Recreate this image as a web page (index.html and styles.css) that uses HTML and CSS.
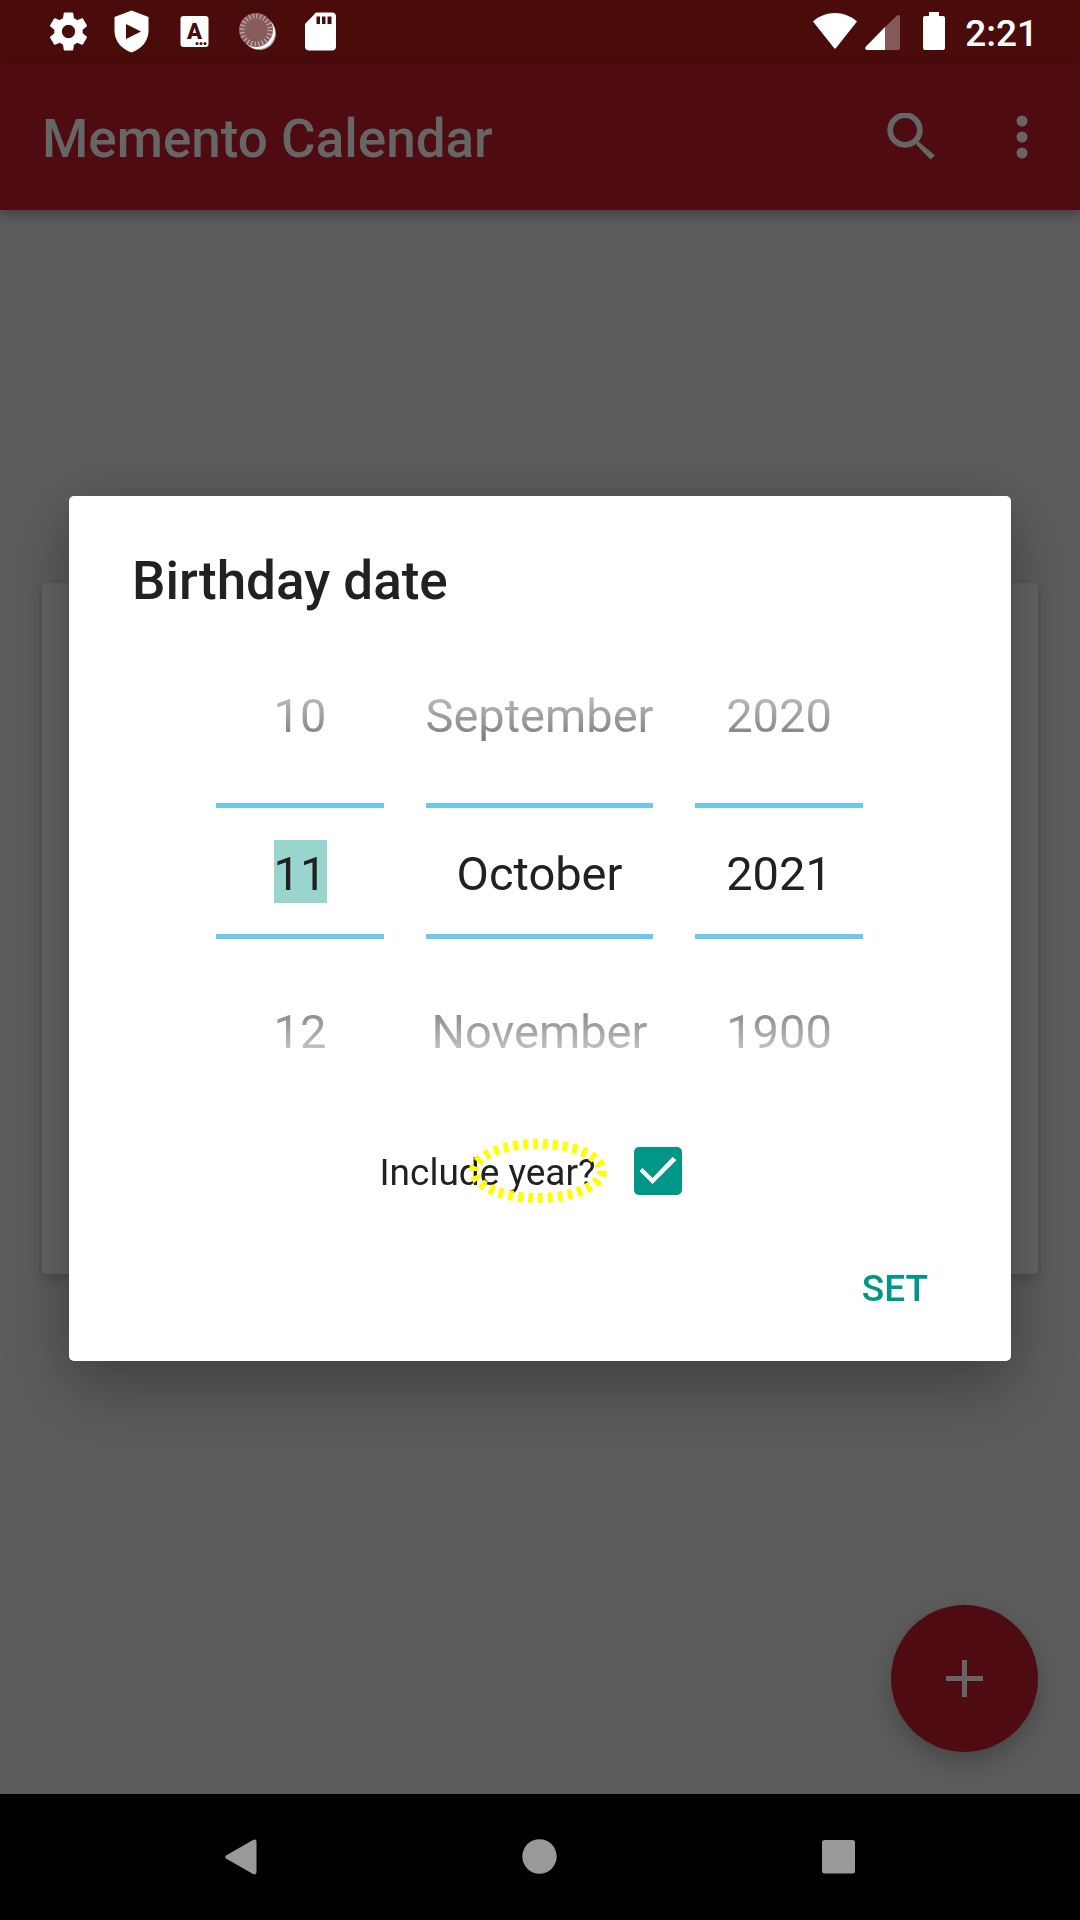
FILE: index.html
```html
<!DOCTYPE html>
<html lang="en">
<head>
<meta charset="utf-8">
<meta name="viewport" content="width=device-width, initial-scale=1">
<title>Memento Calendar</title>
<link rel="stylesheet" href="styles.css">
</head>
<body>
<div class="screen">
  <div class="status-bar">
    <div class="status-group">
      <svg class="status-icon" viewBox="0 0 63 63" aria-hidden="true">
        <g transform="translate(31.500 31.500) scale(1.900) translate(-12 -12)"><path fill="#fff" d="M19.430 12.980c.04-.32.07-.64.07-.98s-.03-.66-.07-.98l2.110-1.650c.19-.15.240-.42.120-.64l-2-3.460c-.12-.22-.39-.3-.61-.22l-2.490 1c-.52-.4-1.080-.73-1.690-.98l-.38-2.650C14.460 2.180 14.250 2 14 2h-4c-.25 0-.46.180-.49.420l-.38 2.650c-.61.250-1.170.590-1.690.98l-2.490-1c-.23-.09-.49 0-.61.220l-2 3.460c-.13.220-.07.490.120.640l2.110 1.650c-.04.320-.07.650-.07.980s.03.660.07.980l-2.110 1.650c-.19.150-.24.420-.12.640l2 3.460c.12.220.39.300.61.220l2.490-1c.52.400 1.080.730 1.690.980l.38 2.650c.03.240.24.420.49.420h4c.25 0 .46-.18.490-.42l.38-2.650c.61-.25 1.170-.59 1.690-.98l2.490 1c.23.090.49 0 .61-.22l2-3.460c.12-.22.070-.49-.12-.64zM12 15.500a3.500 3.500 0 1 1 0-7 3.500 3.500 0 0 1 0 7z"/></g>
      </svg>
      <svg class="status-icon" viewBox="0 0 63 63" aria-hidden="true">
        <path fill="#fff" fill-rule="evenodd" d="M31.500 10.500 48.500 17v14c0 10-7 18-17 21.500C21.500 49 14.500 41 14.500 31V17zM26 24v15l15-7.500z"/>
      </svg>
      <svg class="status-icon" viewBox="0 0 63 63" aria-hidden="true">
        <rect x="17.500" y="16" width="28" height="31" rx="3" fill="#fff"/>
        <text class="status-letter" x="31.500" y="39" text-anchor="middle">A</text>
        <g fill="#4a0b0b"><circle cx="34" cy="43.500" r="1.500"/><circle cx="38" cy="43.500" r="1.500"/><circle cx="42" cy="43.500" r="1.500"/></g>
      </svg>
      <svg class="status-icon" viewBox="0 0 63 63" aria-hidden="true">
        <circle cx="33.500" cy="33.500" r="16.500" fill="#b99a9a"/>
        <circle cx="32.500" cy="32.500" r="16.500" fill="#fff"/>
        <circle cx="30" cy="30" r="17" fill="#875c5c"/>
        <circle cx="30" cy="30" r="14" fill="none" stroke="#c3acac" stroke-width="5" stroke-dasharray="1.200 2.465"/>
      </svg>
      <svg class="status-icon" viewBox="0 0 63 63" aria-hidden="true">
        <path fill="#fff" fill-rule="evenodd" d="M27 12.500h16c2.500 0 4 1.500 4 4v30c0 2.500-1.500 4-4 4H20c-2.500 0-4-1.500-4-4V24zM27.500 16.500v7.500h3.500v-7.500zM33 16.500v7.500h3.500v-7.500zM38.500 16.500v7.500H42.500v-7.500z"/>
      </svg>
    </div>
    <div class="status-group">
      <svg class="signal-icon" viewBox="0 0 52 63" aria-hidden="true">
        <path fill="#fff" d="M4 21.500C10 16 18 13 26 13s16 3 22 8.500L27 48q-1 1.500-2 0z"/>
      </svg>
      <svg class="signal-icon" viewBox="0 0 52 63" aria-hidden="true">
        <path fill="#fff" fill-opacity=".32" d="M24 27 36 15.500Q39 14 39 16.500V48q0 2-2 2H24z"/>
        <path fill="#fff" d="M24 27V50H6q-3-1-1-3.500z"/>
      </svg>
      <svg class="signal-icon" viewBox="0 0 52 63" aria-hidden="true">
        <path fill="#fff" d="M16 12h10v4h4q2 0 2 2v30q0 2-2 2H12q-2 0-2-2V18q0-2 2-2h4z"/>
      </svg>
      <time class="clock">2:21</time>
    </div>
  </div>

  <header class="app-bar">
    <h1 class="app-title">Memento Calendar</h1>
    <div class="app-actions">
      <button class="icon-button" type="button" aria-label="Search">
        <svg width="48" height="48" viewBox="0 0 48 48" aria-hidden="true">
          <circle cx="18" cy="17" r="14.800" fill="none" stroke="#666" stroke-width="5.800"/>
          <path d="M28 27.500 31.500 28.500 48 42.500 43.500 46.500 30 32.500z" fill="#666"/>
        </svg>
      </button>
      <button class="icon-button" type="button" aria-label="More options">
        <svg width="12" height="48" viewBox="0 0 12 48" aria-hidden="true">
          <g fill="#666"><circle cx="6" cy="8" r="5.500"/><circle cx="6" cy="24" r="5.500"/><circle cx="6" cy="40" r="5.500"/></g>
        </svg>
      </button>
    </div>
  </header>

  <main class="content">
    <section class="card"></section>
    <button class="fab" type="button" aria-label="Add">
      <svg width="37" height="37" viewBox="0 0 37 37" aria-hidden="true"><path d="M16 0h5v16h16v5H21v16h-5V21H0v-5h16z" fill="#666"/></svg>
    </button>
  </main>

  <nav class="nav-bar">
    <button class="nav-button" type="button" aria-label="Back">
      <svg width="32" height="36" viewBox="0 0 32 36" aria-hidden="true"><path d="M1 16.500 28 1Q31.500-.5 31.500 3V33Q31.500 36.500 28 35L1 19.500Q-.5 18 1 16.500z" fill="#999"/></svg>
    </button>
    <button class="nav-button" type="button" aria-label="Home">
      <svg width="36" height="36" viewBox="0 0 36 36" aria-hidden="true"><circle cx="17.500" cy="17.500" r="17.200" fill="#999"/></svg>
    </button>
    <button class="nav-button" type="button" aria-label="Recent apps">
      <svg width="34" height="34" viewBox="0 0 34 34" aria-hidden="true"><rect width="33" height="33.500" rx="2.500" fill="#999"/></svg>
    </button>
  </nav>
</div>

<div class="overlay">
  <form class="dialog" role="dialog" aria-labelledby="dialog-title">
    <h2 class="dialog-title" id="dialog-title">Birthday date</h2>
    <div class="picker">
      <div class="picker-column">
        <button class="picker-step picker-prev" type="button">10</button>
        <div class="picker-current"><input class="picker-input picker-selected" type="text" value="11" aria-label="Day"></div>
        <button class="picker-step picker-next" type="button">12</button>
      </div>
      <div class="picker-column">
        <button class="picker-step picker-prev" type="button">September</button>
        <div class="picker-current"><input class="picker-input" type="text" value="October" aria-label="Month"></div>
        <button class="picker-step picker-next" type="button">November</button>
      </div>
      <div class="picker-column">
        <button class="picker-step picker-prev" type="button">2020</button>
        <div class="picker-current"><input class="picker-input" type="text" value="2021" aria-label="Year"></div>
        <button class="picker-step picker-next" type="button">1900</button>
      </div>
    </div>
    <div class="year-row">
      <label class="year-label" for="include-year">Include year?
        <svg class="year-ring" width="140" height="66" viewBox="0 0 140 66" aria-hidden="true">
          <ellipse cx="70" cy="33" rx="64" ry="27" fill="none" stroke="#ff0" stroke-width="10" stroke-dasharray="5 5" pathLength="300"/>
        </svg>
      </label>
      <input class="year-check" id="include-year" type="checkbox" checked>
    </div>
    <div class="dialog-actions">
      <button class="text-button" type="button">SET</button>
    </div>
  </form>
</div>
</body>
</html>
```
FILE: styles.css
```css
* {
  box-sizing: border-box;
}

body {
  margin: 0;
  font-family: Roboto, "Noto Sans", sans-serif;
  background: #5c5c5c;
}

button,
input {
  margin: 0;
  padding: 0;
  border: 0;
  background: none;
  color: inherit;
  font: inherit;
}

svg {
  display: block;
}

.screen {
  display: flex;
  flex-direction: column;
  min-height: 100vh;
}

/* System status bar */
.status-bar {
  display: flex;
  justify-content: space-between;
  align-items: center;
  height: 63px;
  padding: 0 42px 0 37px;
  background: #4a0b0b;
  color: #fff;
}

.status-group {
  display: flex;
  align-items: center;
}

.status-icon {
  width: 63px;
  height: 63px;
}

.status-letter {
  font-size: 22px;
  font-weight: 900;
  fill: #4a0b0b;
}

.signal-icon {
  width: 52px;
  height: 63px;
}

.clock {
  padding-top: 4px;
  font-size: 37px;
  font-weight: 500;
  line-height: 60px;
}

/* App bar */
.app-bar {
  position: relative;
  display: flex;
  justify-content: space-between;
  align-items: center;
  height: 147px;
  padding: 0 16px 0 42px;
  background: #4e0c12;
  box-shadow: 0 4px 12px rgba(0, 0, 0, 0.32);
}

.app-title {
  margin: 0;
  padding-top: 4px;
  color: #666;
  font-size: 53px;
  font-weight: 500;
  line-height: 62px;
}

.app-actions {
  display: flex;
  gap: 27px;
}

.icon-button {
  display: flex;
  justify-content: center;
  align-items: center;
  width: 84px;
  height: 84px;
}

/* Content behind the dialog */
.content {
  position: relative;
  display: flex;
  flex: 1;
  flex-direction: column;
  justify-content: center;
  padding: 0 42px 147px;
}

.card {
  min-height: 691px;
  border-radius: 5px;
  background: #646464;
  box-shadow: 0 4px 12px rgba(0, 0, 0, 0.2);
}

.fab {
  position: absolute;
  right: 42px;
  bottom: 42px;
  display: flex;
  justify-content: center;
  align-items: center;
  width: 147px;
  height: 147px;
  border-radius: 50%;
  background: #4e0c12;
  box-shadow: 0 10px 24px rgba(0, 0, 0, 0.24);
}

/* System navigation bar */
.nav-bar {
  position: relative;
  display: flex;
  height: 126px;
  padding: 0 92px;
  background: #000;
}

.nav-button {
  display: flex;
  flex: 1;
  justify-content: center;
  align-items: center;
}

/* Dialog */
.overlay {
  position: fixed;
  inset: 63px 0 126px;
  display: flex;
  justify-content: center;
  align-items: center;
  padding: 0 69px;
}

.dialog {
  flex: 1;
  padding: 54px 63px 30px;
  border-radius: 5px;
  background: #fff;
  color: #212121;
  box-shadow: 0 32px 64px rgba(0, 0, 0, 0.24), 0 0 48px rgba(0, 0, 0, 0.12);
}

.dialog-title {
  margin: 0 0 38px;
  font-size: 53px;
  font-weight: 500;
  line-height: 62px;
}

.picker {
  display: grid;
  grid-template-columns: 168px 227px 168px;
  justify-content: center;
  gap: 42px;
  padding-right: 1px;
  font-size: 47px;
  line-height: 63px;
}

.picker-column {
  display: flex;
  flex-direction: column;
}

.picker-step {
  display: flex;
  justify-content: center;
  align-items: center;
  height: 153px;
  white-space: nowrap;
}

.picker-prev {
  padding-bottom: 22px;
  mask-image: linear-gradient(to top, #000, transparent);
}

.picker-next {
  padding-top: 32px;
  mask-image: linear-gradient(to bottom, #000, transparent);
}

.picker-current {
  display: flex;
  justify-content: center;
  align-items: center;
  height: 136px;
  border: solid #6cc9ec;
  border-width: 5px 0;
}

.picker-input {
  width: 100%;
  height: 63px;
  padding-top: 4px;
  text-align: center;
}

.picker-selected {
  width: 53px;
  background: #99d5cf;
}

.year-row {
  display: flex;
  justify-content: center;
  align-items: center;
  gap: 21px;
  height: 84px;
  margin: 37px 0 33px;
}

.year-label {
  position: relative;
  padding-top: 4px;
  font-size: 37px;
  line-height: 44px;
}

.year-ring {
  position: absolute;
  top: -9px;
  right: -13px;
}

.year-check {
  width: 48px;
  height: 48px;
  margin: 0 18px;
  border-radius: 5px;
  background: #009688;
  appearance: none;
}

.year-check:checked::before {
  content: "";
  display: block;
  height: 48px;
  background: #fff;
  clip-path: polygon(5px 24px, 8px 21px, 18px 31px, 38px 10px, 42px 13px, 18px 37px);
}

.dialog-actions {
  display: flex;
  justify-content: flex-end;
  padding-bottom: 1px;
}

.text-button {
  height: 84px;
  padding: 0 20px;
  color: #009688;
  font-size: 37px;
  font-weight: 500;
}
```
